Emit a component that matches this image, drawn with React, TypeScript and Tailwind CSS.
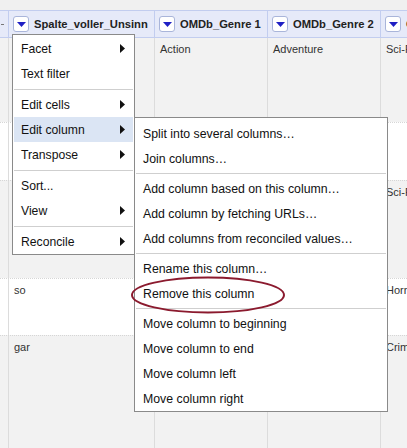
import React from "react";

function DropBtn() {
  return (
    <div className="w-[16px] h-[16px] shrink-0 bg-white border border-[#a9b5da] rounded-[3px] flex items-center justify-center">
      <svg width="9" height="5" viewBox="0 0 9 5">
        <polygon points="0,0 9,0 4.5,5" fill="#1f1fc4" />
      </svg>
    </div>
  );
}

function Arrow() {
  return (
    <svg width="5" height="9" viewBox="0 0 5 9" className="shrink-0">
      <polygon points="0,0 5,4.5 0,9" fill="#111" />
    </svg>
  );
}

function Sep({ h }: { h: string }) {
  return (
    <div className={`${h} flex items-center`}>
      <div className="h-px w-full bg-[#cfcfcf]" />
    </div>
  );
}

function MainItem({ label, arrow, active }: { label: string; arrow?: boolean; active?: boolean }) {
  return (
    <div
      className={`h-[25px] flex items-center justify-between pl-[7px] pr-[8px] text-[12.2px] text-[#111] ${
        active ? "bg-[#dbe5f4]" : ""
      }`}
    >
      <span className="pt-[2px]">{label}</span>
      {arrow ? <Arrow /> : null}
    </div>
  );
}

function SubItem({ label }: { label: string }) {
  return <div className="h-[25px] flex items-center pl-[7px] pt-[2px] text-[12.3px] text-[#111]">{label}</div>;
}

const cols = "grid grid-cols-[8px_146px_113px_113px_1fr]";

function Row({
  h,
  bg,
  first,
  cells,
}: {
  h: string;
  bg: string;
  first?: boolean;
  cells: string[];
}) {
  return (
    <div className={`${cols} ${h} ${bg} ${first ? "" : "border-t border-dotted border-[#d6d6d6]"}`}>
      <div />
      {cells.map((c, i) => (
        <div key={i} className="border-l border-[#dcdcdc] pl-[5px] pt-[5px] text-[11px] leading-[13px] text-[#333] whitespace-nowrap overflow-hidden">
          {c}
        </div>
      ))}
    </div>
  );
}

export default function App() {
  return (
    <div className="relative w-[407px] h-[448px] overflow-hidden bg-[#f2f2f2] font-['Liberation_Sans',Arial,sans-serif] flex flex-col">
      <div className="h-[10px] bg-[#f0f0f0] shrink-0" />
      <div className={`${cols} h-[28px] shrink-0 bg-[#e6eaf9] border-y border-[#c2cdef]`}>
        <div className="flex items-center">
          <div className="w-[3px] h-px bg-[#777] ml-[1px]" />
        </div>
        {["Spalte_voller_Unsinn", "OMDb_Genre 1", "OMDb_Genre 2", "OMDb_Genre 3"].map((t) => (
          <div key={t} className="border-l border-[#c2cdef] flex items-center gap-[5px] pl-[4px] overflow-hidden whitespace-nowrap">
            <DropBtn />
            <span className="text-[11.2px] font-bold text-[#222]">{t}</span>
          </div>
        ))}
      </div>
      <Row h="h-[84px]" bg="bg-[#f2f2f2]" first cells={["", "Action", "Adventure", "Sci-Fi"]} />
      <Row h="h-[58px]" bg="bg-white" cells={["", "", "", ""]} />
      <Row h="h-[98px]" bg="bg-[#f2f2f2]" cells={["", "", "", "Sci-Fi"]} />
      <Row h="h-[57px]" bg="bg-white" cells={["so", "", "", "Horror"]} />
      <Row h="flex-1" bg="bg-[#f2f2f2]" cells={["gar", "", "", "Crime"]} />

      {/* main menu */}
      <div className="absolute left-[12px] top-[34px] w-[123px] bg-white border border-[#8a8a8a] pt-[1px] px-[1px]">
        <MainItem label="Facet" arrow />
        <MainItem label="Text filter" />
        <Sep h="h-[6px]" />
        <MainItem label="Edit cells" arrow />
        <MainItem label="Edit column" arrow active />
        <MainItem label="Transpose" arrow />
        <Sep h="h-[6px]" />
        <MainItem label="Sort..." />
        <MainItem label="View" arrow />
        <Sep h="h-[6px]" />
        <MainItem label="Reconcile" arrow />
      </div>

      {/* submenu */}
      <div className="absolute left-[134px] top-[117px] w-[254px] bg-white border border-[#8a8a8a] pt-[3px] px-[1px]">
        <SubItem label="Split into several columns…" />
        <SubItem label="Join columns…" />
        <Sep h="h-[5px]" />
        <SubItem label="Add column based on this column…" />
        <SubItem label="Add column by fetching URLs…" />
        <SubItem label="Add columns from reconciled values…" />
        <Sep h="h-[5px]" />
        <SubItem label="Rename this column…" />
        <SubItem label="Remove this column" />
        <Sep h="h-[5px]" />
        <SubItem label="Move column to beginning" />
        <SubItem label="Move column to end" />
        <SubItem label="Move column left" />
        <SubItem label="Move column right" />
      </div>

      {/* annotation ellipse */}
      <svg className="absolute left-[130px] top-[276px]" width="157" height="39" viewBox="0 0 157 39">
        <ellipse cx="78" cy="19" rx="76" ry="17.5" fill="none" stroke="#8b1a2e" strokeWidth="2" />
      </svg>
    </div>
  );
}
